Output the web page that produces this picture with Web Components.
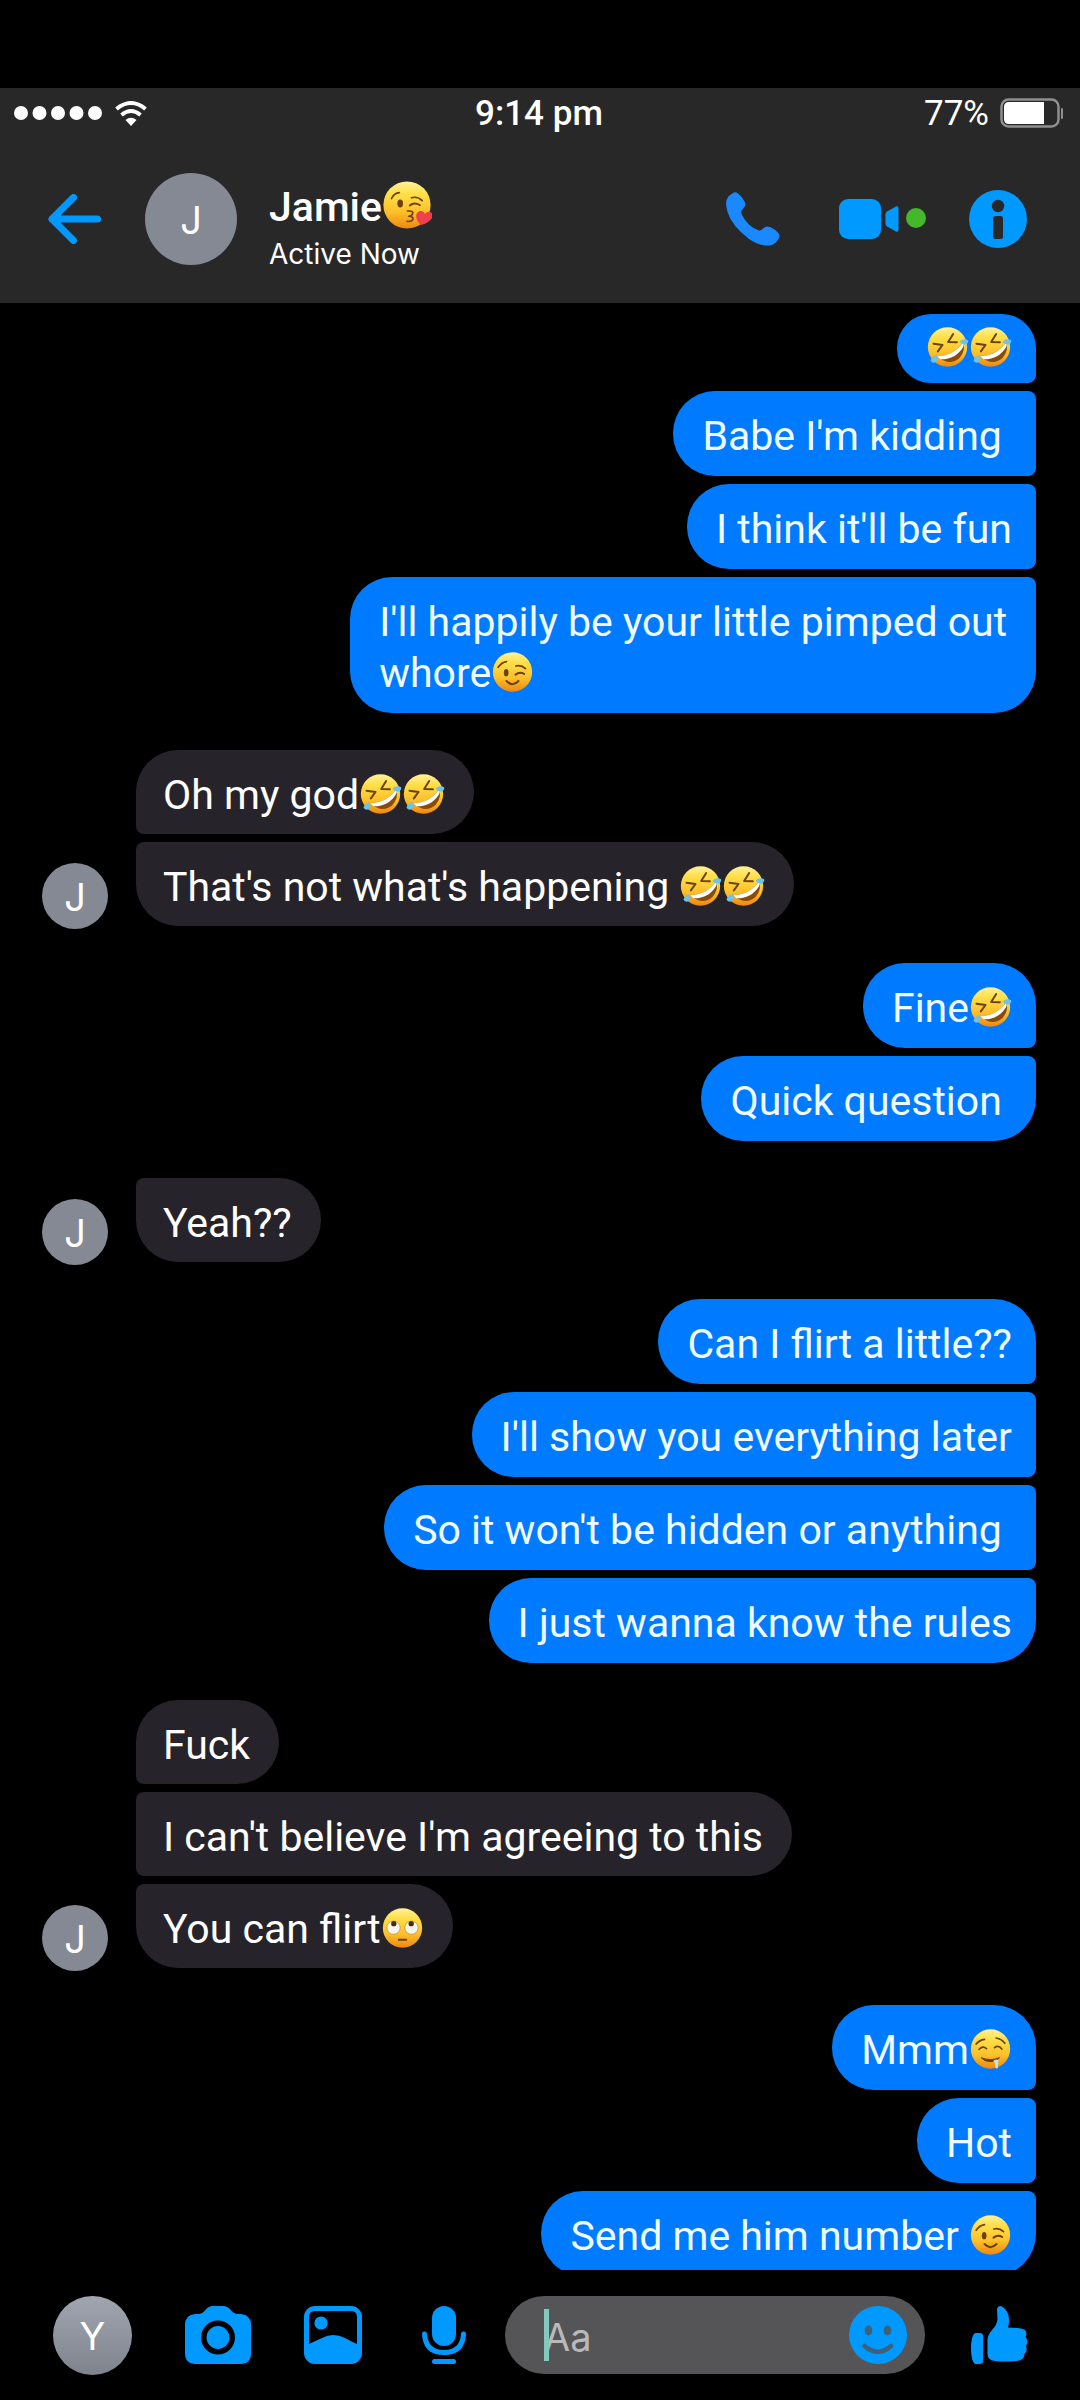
<!DOCTYPE html>
<html lang="en">
<head>
<meta charset="utf-8">
<meta name="viewport" content="width=device-width, initial-scale=1">
<title>Jamie</title>
<style>
  html, body { margin: 0; background: #000; }
  body { font-family: Roboto, "Liberation Sans", sans-serif; color: #fff; }
</style>
</head>
<body>
<chat-app>
  <status-bar slot="top" time="9:14 pm" battery="77"></status-bar>
  <chat-header slot="top" initial="J">
    <span slot="name">Jamie<chat-emoji name="kiss" size="large"></chat-emoji></span>
    <span slot="presence">Active Now</span>
  </chat-header>

  <message-group from="me">
    <chat-bubble from="me" pos="first" compact><chat-emoji name="rofl"></chat-emoji><chat-emoji name="rofl"></chat-emoji></chat-bubble>
    <chat-bubble from="me" pos="mid">Babe I'm kidding </chat-bubble>
    <chat-bubble from="me" pos="mid">I think it'll be fun</chat-bubble>
    <chat-bubble from="me" pos="last">I'll happily be your little pimped out whore<chat-emoji name="wink"></chat-emoji></chat-bubble>
  </message-group>
  <message-group from="them" initial="J">
    <chat-bubble from="them" pos="first">Oh my god<chat-emoji name="rofl"></chat-emoji><chat-emoji name="rofl"></chat-emoji></chat-bubble>
    <chat-bubble from="them" pos="last">That's not what's happening <chat-emoji name="rofl"></chat-emoji><chat-emoji name="rofl"></chat-emoji></chat-bubble>
  </message-group>
  <message-group from="me">
    <chat-bubble from="me" pos="first">Fine<chat-emoji name="rofl"></chat-emoji></chat-bubble>
    <chat-bubble from="me" pos="last">Quick question </chat-bubble>
  </message-group>
  <message-group from="them" initial="J">
    <chat-bubble from="them" pos="last">Yeah??</chat-bubble>
  </message-group>
  <message-group from="me">
    <chat-bubble from="me" pos="first">Can I flirt a little??</chat-bubble>
    <chat-bubble from="me" pos="mid">I'll show you everything later</chat-bubble>
    <chat-bubble from="me" pos="mid">So it won't be hidden or anything </chat-bubble>
    <chat-bubble from="me" pos="last">I just wanna know the rules</chat-bubble>
  </message-group>
  <message-group from="them" initial="J">
    <chat-bubble from="them" pos="first">Fuck</chat-bubble>
    <chat-bubble from="them" pos="mid">I can't believe I'm agreeing to this</chat-bubble>
    <chat-bubble from="them" pos="last">You can flirt<chat-emoji name="roll"></chat-emoji></chat-bubble>
  </message-group>
  <message-group from="me">
    <chat-bubble from="me" pos="first">Mmm<chat-emoji name="drool"></chat-emoji></chat-bubble>
    <chat-bubble from="me" pos="mid">Hot</chat-bubble>
    <chat-bubble from="me" pos="last">Send me him number <chat-emoji name="wink"></chat-emoji></chat-bubble>
  </message-group>

  <chat-composer slot="bottom" initial="Y"></chat-composer>
</chat-app>

<script>
const define = (name, render) => customElements.define(name, class extends HTMLElement {
  constructor() { super(); this.attachShadow({ mode: 'open' }); }
  connectedCallback() { this.shadowRoot.innerHTML = render(this); }
});

const BUTTON = `button { display: block; flex: none; margin: 0; padding: 0; border: 0; background: none; color: #0099ff; cursor: pointer; } svg { display: block; }`;

/* ---------- emoji ---------- */
const LINE = 'fill="none" stroke="#6b4108" stroke-linecap="round" stroke-linejoin="round"';
const EMOJI = {
  rofl: ['rolling on the floor laughing', `
    <path d="M18 50 L45 54 L31 73 M77 21 L62 45 L88 46" ${LINE} stroke-width="6" stroke-linejoin="miter"/>
    <path d="M29 88 Q80 86 107 46 Q116 70 96 93 Q66 120 29 88Z" fill="#8a4b0a"/>
    <path d="M29 88 Q80 86 107 46 Q110 53 107 60 Q84 98 39 97Z" fill="#fff"/>
    <path d="M96 44 Q108 32 122 40 Q124 50 112 53 Q102 53 96 44Z" fill="#6cc3ec"/>
    <path d="M28 84 Q32 98 24 106 Q12 110 9 100 Q12 90 28 84Z" fill="#6cc3ec"/>`],
  wink: ['winking', `
    <path d="M17 46 Q27 31 42 29 M70 42 Q86 38 99 50" ${LINE} stroke-width="5"/>
    <ellipse cx="41" cy="62" rx="7" ry="11" fill="#6b4108"/>
    <path d="M69 68 Q82 58 95 66" ${LINE} stroke-width="6"/>
    <path d="M42 87 Q60 106 78 87" ${LINE} stroke-width="6"/>`],
  kiss: ['face blowing a kiss', `
    <path d="M21 44 Q28 30 41 29 M71 42 Q86 37 98 49" ${LINE} stroke-width="4"/>
    <ellipse cx="43" cy="56" rx="7" ry="10" fill="#6b4108"/>
    <path d="M67 61 Q78 52 92 60" ${LINE} stroke-width="5"/>
    <path d="M61 75 Q78 74 74 82 Q71 88 64 88 Q76 88 75 96 Q72 102 60 101" ${LINE} stroke-width="4"/>
    <path d="M95 110 C82 98 78 82 90 76 C98 73 103 78 105 83 C111 74 121 76 124 84 C126 96 110 106 95 110Z" fill="#f0404c"/>`],
  roll: ['face with rolling eyes', `
    <ellipse cx="33" cy="59" rx="20" ry="20" fill="#f7f5ea" stroke="#c88716" stroke-width="2"/>
    <ellipse cx="87" cy="59" rx="20" ry="20" fill="#f7f5ea" stroke="#c88716" stroke-width="2"/>
    <circle cx="34" cy="47" r="8" fill="#4a2c0c"/><circle cx="86" cy="47" r="8" fill="#4a2c0c"/>
    <path d="M49 95 H71" ${LINE} stroke-width="6"/>`],
  drool: ['drooling', `
    <path d="M17 45 Q27 33 42 31 M77 27 Q94 30 103 43" ${LINE} stroke-width="5"/>
    <path d="M26 61 Q36 49 48 59 M72 56 Q84 47 94 60" ${LINE} stroke-width="5"/>
    <path d="M32 86 Q60 98 87 86 Q76 98 60 98 Q42 98 32 86Z" fill="#6b4108" stroke="#6b4108" stroke-width="3" stroke-linejoin="round"/>
    <path d="M68 96 Q76 88 84 94 L82 116 Q78 122 74 115 L74 102Z" fill="#b9e6ee"/>`]
};
define('chat-emoji', el => {
  const [label, art] = EMOJI[el.getAttribute('name')];
  return `<style>
    :host { display: inline-flex; overflow: hidden; width: 43px; height: 40px; vertical-align: -5px; white-space: normal; }
    :host([size=large]) { width: 50px; height: 48px; vertical-align: -8px; }
    svg { display: block; width: 100%; height: 100%; overflow: visible; }
  </style>
  <svg viewBox="0 0 120 120" role="img" aria-label="${label}">
    <defs><linearGradient id="g" x1="0" y1="0" x2="0" y2="1"><stop offset="0" stop-color="#fff19a"/><stop offset=".25" stop-color="#ffe04a"/><stop offset=".65" stop-color="#fcc02a"/><stop offset="1" stop-color="#ef8710"/></linearGradient></defs>
    <circle cx="60" cy="60" r="59" fill="url(#g)"/>${art}
  </svg>`;
});

/* ---------- avatar ---------- */
define('user-avatar', el => `<style>
    :host { display: flex; flex: none; align-items: center; justify-content: center; box-sizing: border-box;
      width: 66px; height: 66px; padding-top: 2px; border-radius: 50%; background: #858993; color: #fff; font-family: Inter, sans-serif; font-size: 38px; line-height: 1; }
    :host([size=header]) { width: 92px; height: 92px; }
    :host([size=composer]) { width: 79px; height: 79px; background: linear-gradient(#a0a5b0, #7f838c); }
  </style><slot></slot>`);

/* ---------- status bar ---------- */
define('status-bar', el => `<style>
    :host { display: grid; grid-template-columns: 1fr auto 1fr; align-items: center; height: 50px; padding: 0 16px 0 14px; font-size: 35px; line-height: 1; }
    .left, .right { display: flex; align-items: center; }
    .left { gap: 13px; }
    .right { justify-content: flex-end; gap: 11px; }
    .time { font-weight: 500; }
    svg { display: block; flex: none; }
  </style>
  <div class="left">
    <svg width="88" height="14" fill="#fff"><circle cx="7" cy="7" r="7"/><circle cx="25.5" cy="7" r="7"/><circle cx="44" cy="7" r="7"/><circle cx="62.5" cy="7" r="7"/><circle cx="81" cy="7" r="7"/></svg>
    <svg width="32" height="25" viewBox="0 0 32 25" fill="none" stroke="#fff" stroke-width="4"><path d="M1.5 8 Q16 -4 30.500 8"/><path d="M6.500 14 Q16 6 25.500 14"/><path d="M16 25 L10.500 19 Q16 14.500 21.500 19Z" fill="#fff" stroke="none"/></svg>
  </div>
  <div class="time">${el.getAttribute('time')}</div>
  <div class="right"><span>${el.getAttribute('battery')}%</span>
    <svg width="64" height="30" viewBox="0 0 64 30"><rect x="1.500" y="1.500" width="57" height="27" rx="7" fill="none" stroke="#8f8f8f" stroke-width="2.500"/><path d="M9 4 H44 V26 H9 Q4 26 4 21 V9 Q4 4 9 4Z" fill="#fff"/><rect x="61" y="10" width="2" height="11" rx="1" fill="#8f8f8f"/></svg>
  </div>`);

/* ---------- header ---------- */
define('chat-header', el => `<style>${BUTTON}
    :host { display: flex; align-items: center; height: 162px; padding: 0 53px 3px 48px; }
    user-avatar { margin-left: 44px; }
    .who { display: flex; flex: 1; flex-direction: column; gap: 3px; margin-left: 32px; padding-top: 16px; white-space: nowrap; }
    .name { font-size: 41px; font-weight: 500; line-height: 50px; }
    .presence { font-family: Inter, sans-serif; font-size: 28px; line-height: 38px; }
    .actions { display: flex; align-items: center; }
    .video { margin: 0 43px 0 59px; }
  </style>
  <button aria-label="Back"><svg width="53" height="50" viewBox="0 0 53 50" fill="none" stroke="currentColor" stroke-width="7" stroke-linecap="round" stroke-linejoin="round"><path d="M25.500 3.500 L4 25 L25.500 46.500 M4 25 H49.500"/></svg></button>
  <user-avatar size="header">${el.getAttribute('initial')}</user-avatar>
  <div class="who"><div class="name"><slot name="name"></slot></div><div class="presence"><slot name="presence"></slot></div></div>
  <div class="actions">
    <button aria-label="Call"><svg width="54" height="54" viewBox="0 0 54 54" fill="#1a88ff"><path d="M7 1 Q10 -1 12.500 2 Q18 7 19.500 12 Q19.500 14 16 18 Q14.500 20 16 23 Q22 35 33 38.500 Q35 39 37 36.500 Q40 33.500 44 35 Q50 37.500 53 42 Q54 44 53 46 Q49 53 44 53.500 Q34 54.500 23 47 Q6 34 1.500 20 Q-1 11 1 7 Q3 3 7 1Z"/></svg></button>
    <button class="video" aria-label="Video call"><svg width="87" height="42" viewBox="0 0 87 42" fill="currentColor"><rect x="0" y="1" width="42" height="40" rx="9"/><path d="M57 8.500 Q59.500 7.500 59.500 10.500 V31.500 Q59.500 34.500 57 33.500 L48 28.500 Q46.500 27.500 46.500 25.500 V16.500 Q46.500 14.500 48 13.500Z"/><circle cx="77" cy="20" r="10" fill="#44b72a"/></svg></button>
    <button aria-label="Info"><svg width="58" height="58" viewBox="0 0 58 58"><circle cx="29" cy="29" r="29" fill="currentColor"/><circle cx="29" cy="16" r="6.200" fill="#282828"/><rect x="24" y="26" width="10" height="23" rx="2.500" fill="#282828"/></svg></button>
  </div>`);

/* ---------- messages ---------- */
define('chat-bubble', el => `<style>
    :host { --round: 42px; --tight: 8px; display: block; box-sizing: border-box; max-width: 100%; width: fit-content;
      font-size: 41px; line-height: 51px; white-space: pre-wrap; border-radius: var(--round); }
    :host([from=me]) { padding: 20px 24px 14px 29px; background: #007aff; color: #f0fbff; }
    :host([from=them]) { padding: 20px 29px 13px 27px; background: #26242a; color: #fff; }
    :host([compact]) { --round: 34px; padding-top: 9px !important; padding-bottom: 9px !important; }
    :host([from=me][pos=first]) { border-bottom-right-radius: var(--tight); }
    :host([from=me][pos=mid]) { border-top-right-radius: var(--tight); border-bottom-right-radius: var(--tight); }
    :host([from=me][pos=last]) { border-top-right-radius: var(--tight); }
    :host([from=them][pos=first]) { border-bottom-left-radius: var(--tight); }
    :host([from=them][pos=mid]) { border-top-left-radius: var(--tight); border-bottom-left-radius: var(--tight); }
    :host([from=them][pos=last]) { border-top-left-radius: var(--tight); }
  </style><slot></slot>`);

define('message-group', el => `<style>
    :host { display: flex; align-items: flex-end; gap: 28px; }
    :host([from=me]) { justify-content: flex-end; }
    .stack { display: flex; flex-direction: column; align-items: flex-start; gap: 8px; max-width: 69%; }
    :host([from=me]) .stack { align-items: flex-end; }
    user-avatar { margin-bottom: -3px; }
  </style>
  ${el.hasAttribute('initial') ? `<user-avatar>${el.getAttribute('initial')}</user-avatar>` : ''}
  <div class="stack"><slot></slot></div>`);

/* ---------- composer ---------- */
define('chat-composer', el => `<style>${BUTTON}
    :host { display: flex; align-items: center; gap: 53px; box-sizing: border-box; height: 130px; padding: 0 52px 0 53px; background: #000; }
    .entry { display: flex; flex: 1; align-items: center; gap: 46px; margin-left: -21px; }
    label { position: relative; display: flex; flex: 1; min-width: 0; align-items: center; box-sizing: border-box; height: 78px; padding: 0 18px 0 39px; border-radius: 39px; background: #555557; }
    input { flex: 1; min-width: 0; width: 0; height: 60px; margin: 0; padding: 4px 0 0; border: 0; outline: 0; background: none; color: #fff; font: 38px Inter, "Liberation Sans", sans-serif; }
    input::placeholder { color: #b9b9b9; opacity: 1; }
    .caret { position: absolute; left: 39px; top: 13px; width: 5px; height: 52px; background: #84c9c0; }
  </style>
  <user-avatar size="composer">${el.getAttribute('initial')}</user-avatar>
  <button aria-label="Camera"><svg width="66" height="58" viewBox="0 0 66 58"><path d="M10 8 H14 Q17 8 19.500 5 Q23 0 28 0 H38 Q43 0 46.500 5 Q49 8 52 8 H56 Q66 9 66 19 V47 Q66 58 55 58 H11 Q0 58 0 47 V19 Q0 9 10 8Z" fill="currentColor"/><circle cx="33" cy="31.500" r="14.200" fill="none" stroke="#000" stroke-width="5.500"/></svg></button>
  <button aria-label="Gallery"><svg width="58" height="58" viewBox="0 0 58 58"><rect width="58" height="58" rx="11" fill="currentColor"/><path d="M11 5 H47 Q53 5 53 11 V38 Q48 36 41 32 Q29 26 18 32 L5 38 V11 Q5 5 11 5Z" fill="#000"/><circle cx="17" cy="17" r="6.600" fill="currentColor"/></svg></button>
  <button aria-label="Voice message"><svg width="58" height="58" viewBox="0 0 58 58" fill="currentColor"><rect x="17" y="0" width="24" height="40" rx="12"/><rect x="17" y="53" width="24" height="5" rx="2.500"/><path d="M9.500 28 Q10.500 46.500 29 46.500 Q47.500 46.500 48.500 28" fill="none" stroke="currentColor" stroke-width="5" stroke-linecap="round"/></svg></button>
  <div class="entry">
    <label><input type="text" placeholder="Aa" aria-label="Message"><span class="caret"></span>
      <button aria-label="Emoji"><svg width="58" height="58" viewBox="0 0 58 58"><circle cx="29" cy="29" r="29" fill="currentColor"/><g fill="#3f6076"><ellipse cx="19.500" cy="24.500" rx="3.800" ry="5"/><ellipse cx="38.500" cy="24.500" rx="3.800" ry="5"/></g><path d="M15.500 40 Q29 51.500 42 40" fill="none" stroke="#3f6076" stroke-width="4.500" stroke-linecap="round"/></svg></button>
    </label>
    <button aria-label="Like"><svg width="57" height="58" viewBox="0 0 57 58" fill="currentColor"><path d="M4 27 H9 Q12 27 12 30 V55 Q12 58 9 58 H4 Q0 55 0 42 Q0 30 4 27Z"/><path d="M26 3 Q27 -1 31 0.500 Q38 5 38 14 Q38 19 37 21.500 Q49 21.500 54 24 Q56.500 27 54.500 31 Q58 35 55 40 Q57 45 53.500 48 Q53 55 45 55 Q32 56 24 55 Q16.500 54 16.500 48 V33 Q17 29 21 24 Q26 19 26.500 13Z"/></svg></button>
  </div>`);

/* ---------- page ---------- */
define('chat-app', el => `<style>
    :host { display: flex; flex-direction: column; box-sizing: border-box; height: 100vh; padding-top: 88px; background: #000; }
    header { display: flex; flex: none; flex-direction: column; background: #282828; }
    main { display: flex; flex: 1; flex-direction: column; gap: 37px; min-height: 0; overflow: hidden; box-sizing: border-box; padding: 11px 44px 0 42px; }
    footer { flex: none; }
    ::slotted(message-group) { flex: none; }
  </style>
  <header><slot name="top"></slot></header>
  <main><slot></slot></main>
  <footer><slot name="bottom"></slot></footer>`);
</script>
</body>
</html>
